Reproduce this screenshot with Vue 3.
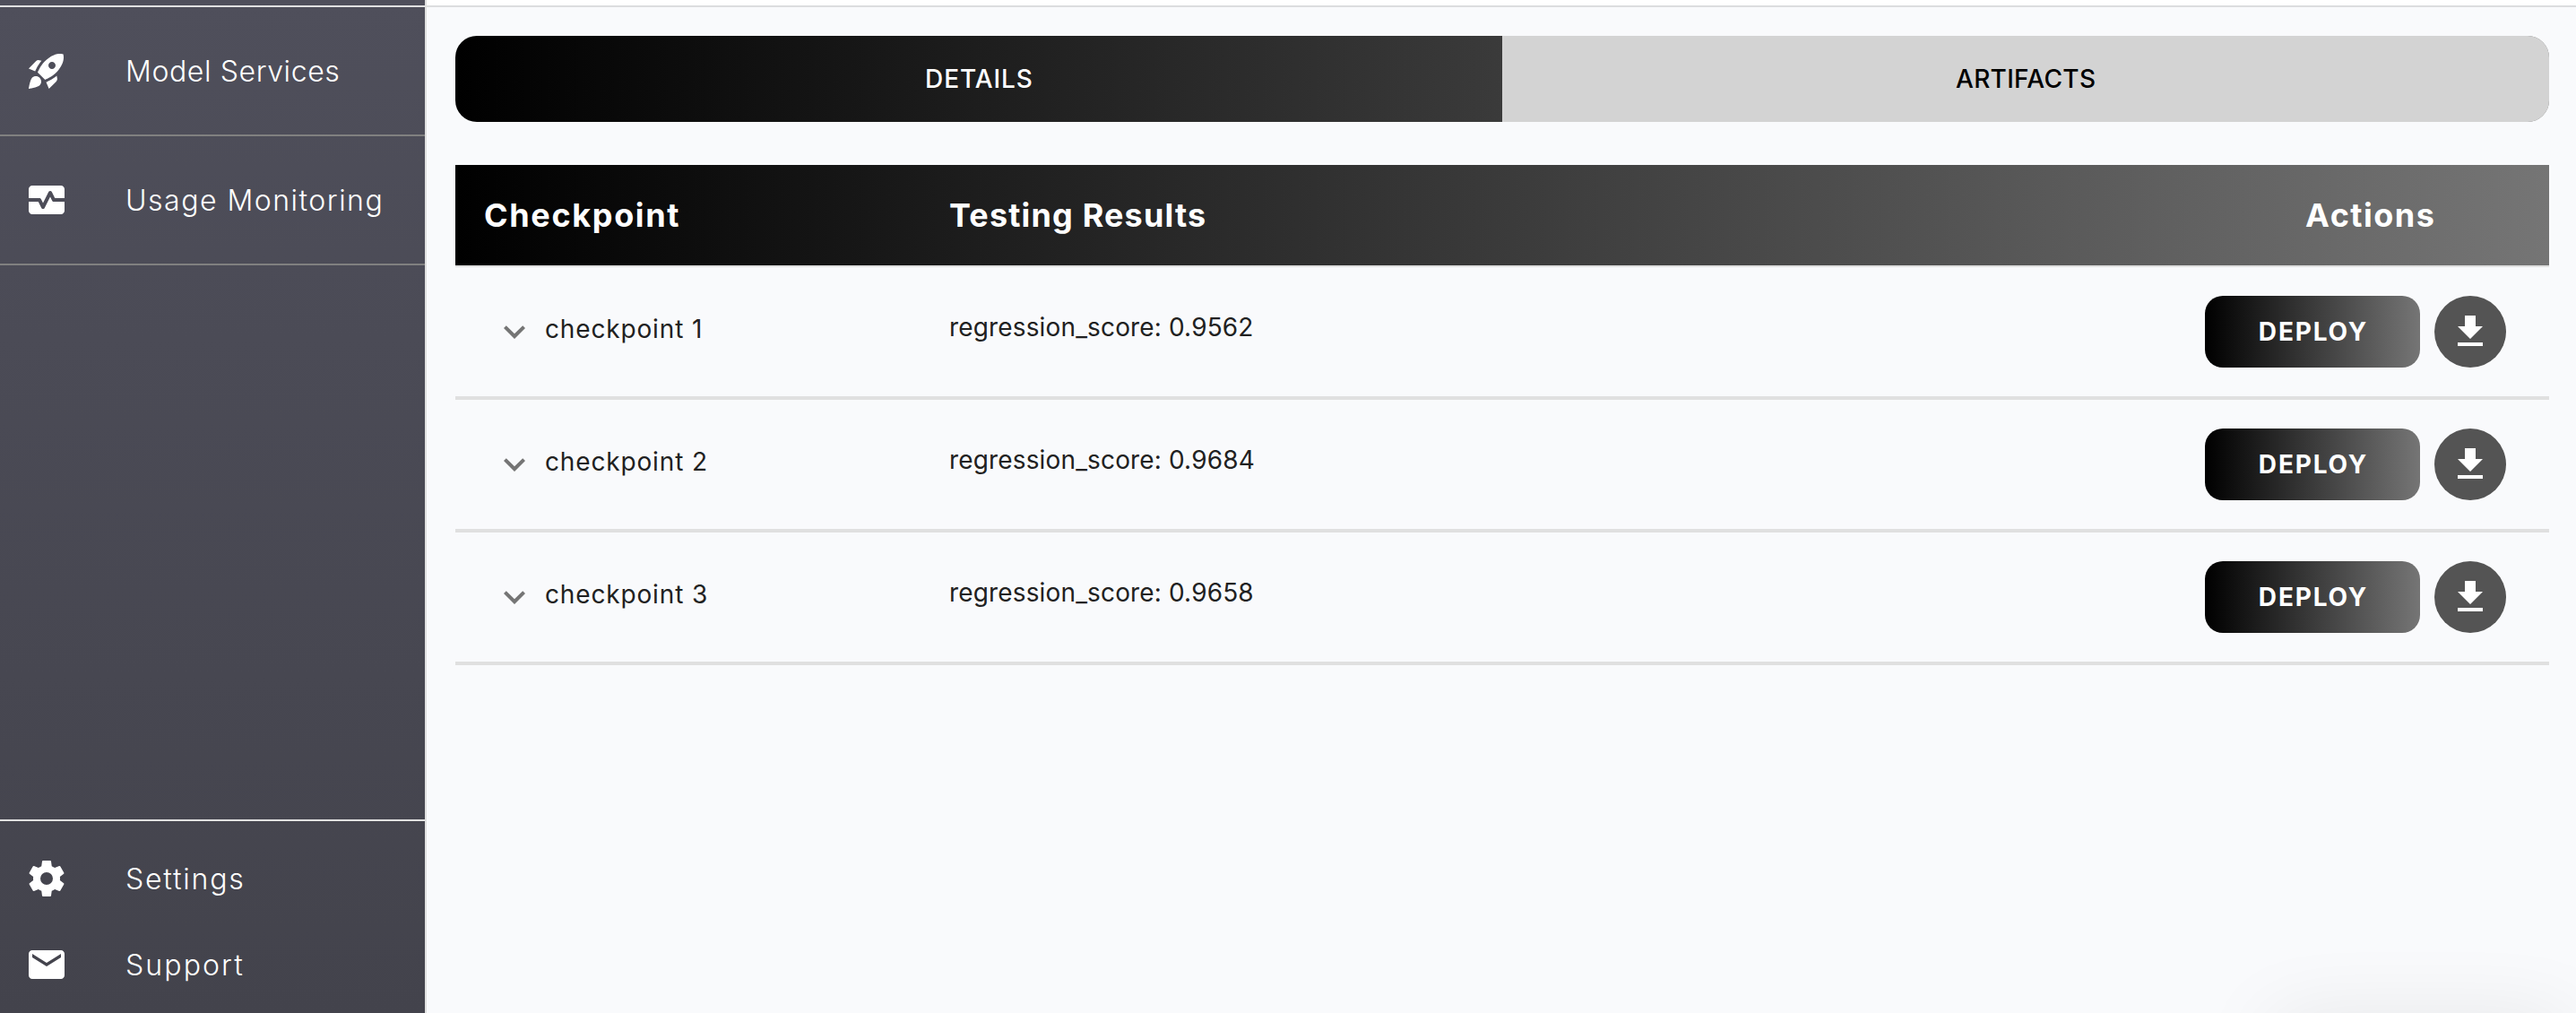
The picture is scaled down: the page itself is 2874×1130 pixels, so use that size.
<script setup>
const mainLinks = [
  {
    label: 'Model Services',
    key: 'services',
    icon: 'M9.19 6.35c-2.04 2.29-3.44 5.58-3.57 5.89L2 10.69l4.05-4.05c.47-.47 1.15-.68 1.81-.55l1.33.26zM11.17 17s3.74-1.55 5.89-3.7c5.4-5.4 4.5-9.62 4.21-10.57-.95-.3-5.17-1.19-10.57 4.21C8.55 9.09 7 12.83 7 12.83L11.17 17zm6.48-2.19c-2.29 2.04-5.58 3.44-5.89 3.57L13.31 22l4.05-4.05c.47-.47.68-1.15.55-1.81l-.26-1.33zM9 18c0 .83-.34 1.58-.88 2.12C6.94 21.3 2 22 2 22s.7-4.94 1.88-6.12C4.42 15.34 5.17 15 6 15c1.66 0 3 1.34 3 3zm4-9c0-1.1.9-2 2-2s2 .9 2 2-.9 2-2 2-2-.9-2-2z',
  },
  {
    label: 'Usage Monitoring',
    key: 'usage',
    icon: 'M15.11 12.45 14 10.24l-3.11 6.21c-.16.34-.51.55-.89.55s-.73-.21-.89-.55L7.38 13H2v5c0 1.1.9 2 2 2h16c1.1 0 2-.9 2-2v-5h-6c-.38 0-.73-.21-.89-.55zM20 4H4c-1.1 0-2 .9-2 2v5h6c.38 0 .73.21.89.55L10 13.76l3.11-6.21c.34-.68 1.45-.68 1.79 0L16.62 11H22V6c0-1.1-.9-2-2-2z',
  },
]

const footLinks = [
  {
    label: 'Settings',
    key: 'settings',
    icon: 'M12,15.5A3.5,3.5 0 0,1 8.5,12A3.5,3.5 0 0,1 12,8.5A3.5,3.5 0 0,1 15.5,12A3.5,3.5 0 0,1 12,15.5M19.43,12.97C19.47,12.65 19.5,12.33 19.5,12C19.5,11.67 19.47,11.34 19.43,11L21.54,9.37C21.73,9.22 21.78,8.95 21.66,8.73L19.66,5.27C19.54,5.05 19.27,4.96 19.05,5.05L16.56,6.05C16.04,5.66 15.5,5.32 14.87,5.07L14.5,2.42C14.46,2.18 14.25,2 14,2H10C9.75,2 9.54,2.18 9.5,2.42L9.13,5.07C8.5,5.32 7.96,5.66 7.44,6.05L4.95,5.05C4.73,4.96 4.46,5.05 4.34,5.27L2.34,8.73C2.21,8.95 2.27,9.22 2.46,9.37L4.57,11C4.53,11.34 4.5,11.67 4.5,12C4.5,12.33 4.53,12.65 4.57,12.97L2.46,14.63C2.27,14.78 2.21,15.05 2.34,15.27L4.34,18.73C4.46,18.95 4.73,19.03 4.95,18.95L7.44,17.94C7.96,18.34 8.5,18.68 9.13,18.93L9.5,21.58C9.54,21.82 9.75,22 10,22H14C14.25,22 14.46,21.82 14.5,21.58L14.87,18.93C15.5,18.67 16.04,18.34 16.56,17.94L19.05,18.95C19.27,19.03 19.54,18.95 19.66,18.73L21.66,15.27C21.78,15.05 21.73,14.78 21.54,14.63L19.43,12.97Z',
  },
  {
    label: 'Support',
    key: 'support',
    icon: 'M20 4H4c-1.1 0-1.99.9-1.99 2L2 18c0 1.1.9 2 2 2h16c1.1 0 2-.9 2-2V6c0-1.1-.9-2-2-2zm0 4l-8 5-8-5V6l8 5 8-5v2z',
  },
]

const checkpoints = [
  { name: 'checkpoint 1', score: '0.9562' },
  { name: 'checkpoint 2', score: '0.9684' },
  { name: 'checkpoint 3', score: '0.9658' },
]
</script>

<template>
  <div class="page">
    <nav class="sidebar">
      <div class="sidebar-top"></div>
      <a v-for="l in mainLinks" :key="l.key" class="link main-link">
        <svg class="icon" viewBox="0 0 24 24"><path :d="l.icon" /></svg>
        <span class="t" :class="l.key">{{ l.label }}</span>
      </a>
      <div class="foot">
        <a v-for="l in footLinks" :key="l.key" class="link foot-link">
          <svg class="icon" viewBox="0 0 24 24"><path :d="l.icon" /></svg>
          <span class="t" :class="l.key">{{ l.label }}</span>
        </a>
      </div>
    </nav>

    <main class="main">
      <header class="topbar"></header>
      <section class="content">
        <div class="tabs">
          <button class="tab active"><span class="t tab-details">DETAILS</span></button>
          <button class="tab idle"><span class="t tab-artifacts">ARTIFACTS</span></button>
        </div>

        <div class="table">
          <div class="row head">
            <div class="col-name"><span class="t h-name">Checkpoint</span></div>
            <div class="col-score"><span class="t h-score">Testing Results</span></div>
            <div class="col-actions"><span class="t h-actions">Actions</span></div>
          </div>
          <div v-for="c in checkpoints" :key="c.name" class="row item">
            <div class="col-name">
              <svg class="icon chevron" viewBox="0 0 24 24">
                <path d="M16.59 8.59L12 13.17 7.41 8.59 6 10l6 6 6-6z" />
              </svg>
              <span class="t name">{{ c.name }}</span>
            </div>
            <div class="col-score"><span class="t score">regression_score: {{ c.score }}</span></div>
            <div class="col-actions">
              <button class="deploy"><span class="t deploy-label">DEPLOY</span></button>
              <button class="download">
                <svg class="icon" viewBox="0 0 24 24">
                  <path d="M19 9h-4V3H9v6H5l7 7 7-7zM5 18v2h14v-2H5z" />
                </svg>
              </button>
            </div>
          </div>
        </div>
      </section>
      <div class="glow"></div>
    </main>
  </div>
</template>

<style>
body { margin: 0; background: #f9fafc; }
</style>

<style scoped>
.page {
  display: flex;
  width: 2874px;
  height: 1130px;
  overflow: hidden;
  background: #f9fafc;
  font-family: Inter, "Liberation Sans", sans-serif;
}
.page * { box-sizing: border-box; }
button { border: 0; padding: 0; margin: 0; font: inherit; }
.icon { width: 48px; height: 48px; flex: none; fill: currentColor; display: block; }
.t { white-space: nowrap; }

.sidebar {
  display: flex;
  flex-direction: column;
  width: 476px;
  flex: none;
  border-right: 2px solid #e0e0e0;
  background: linear-gradient(180deg, #4f4f5b 0%, #43434c 100%);
  color: #fff;
}
.sidebar-top { height: 8px; border-bottom: 2px solid #e0e0e0; }
.link {
  display: flex;
  align-items: center;
  padding-left: 28px;
  gap: 64px;
  font-size: 32px;
  font-weight: 300;
}
.main-link { height: 144px; border-bottom: 2px solid #808080; }
.foot {
  height: 216px;
  margin-top: auto;
  padding-top: 16px;
  border-top: 2px solid #e0e0e0;
}
.foot-link { height: 96px; }
.services { letter-spacing: 0.6px; }
.usage { letter-spacing: 1.5px; }
.settings { letter-spacing: 1.8px; }
.support { letter-spacing: 2.1px; }

.main { position: relative; flex: 1; overflow: hidden; }
.topbar { height: 8px; background: #fff; border-bottom: 2px solid #dcdddf; }
.content { padding: 32px 30px 0 32px; }

.tabs {
  display: flex;
  height: 96px;
  border-radius: 24px;
  overflow: hidden;
  background: linear-gradient(90deg, #000, #757575);
}
.tab { flex: 1; font-size: 28px; font-weight: 500; background: none; color: #fff; }
.idle { background: #d3d3d3; color: #000; }
.tab-details { letter-spacing: 0.9px; margin-right: -0.9px; }
.tab-artifacts { letter-spacing: 0.3px; margin-right: -0.3px; }

.table { margin-top: 48px; }
.row { display: flex; align-items: center; }
.head {
  height: 114px;
  border-bottom: 2px solid #e0e0e0;
  background: linear-gradient(90deg, #000, #757575) padding-box;
  color: #fff;
  font-size: 36px;
  font-weight: 700;
}
.h-name { letter-spacing: 1.65px; }
.h-score { letter-spacing: 1.15px; margin-left: -1px; }
.h-actions { letter-spacing: 1.5px; margin-right: -1.5px; }
.col-name { display: flex; align-items: center; width: 552px; flex: none; padding-left: 32px; }
.col-score { flex: 1; }
.col-actions { display: flex; justify-content: center; width: 400px; flex: none; }
.item {
  height: 148px;
  border-bottom: 4px solid #e0e0e0;
  color: #212121;
  font-size: 28px;
  font-weight: 400;
}
.item .col-name { padding-left: 42px; }
.chevron { color: #757575; margin-right: 10px; }
.name { padding-bottom: 6px; letter-spacing: 0.85px; }
.item .col-score { padding-bottom: 10px; }
.score { letter-spacing: 0.15px; margin-left: -1px; }
.item .col-actions { justify-content: flex-end; gap: 16px; padding-right: 48px; }
.deploy {
  width: 240px;
  height: 80px;
  border-radius: 20px;
  background: linear-gradient(90deg, #000, #757575);
  color: #fff;
  font-size: 28px;
  font-weight: 700;
}
.deploy-label { letter-spacing: 1.8px; margin-right: -1.8px; }
.download {
  display: flex;
  align-items: center;
  justify-content: center;
  width: 80px;
  height: 80px;
  border-radius: 50%;
  background: #545454;
  color: #fff;
}

.glow {
  position: absolute;
  right: 4px;
  bottom: -70px;
  width: 340px;
  height: 60px;
  border-radius: 30px;
  box-shadow: 0 0 90px rgba(0, 0, 0, 0.1);
}
</style>
